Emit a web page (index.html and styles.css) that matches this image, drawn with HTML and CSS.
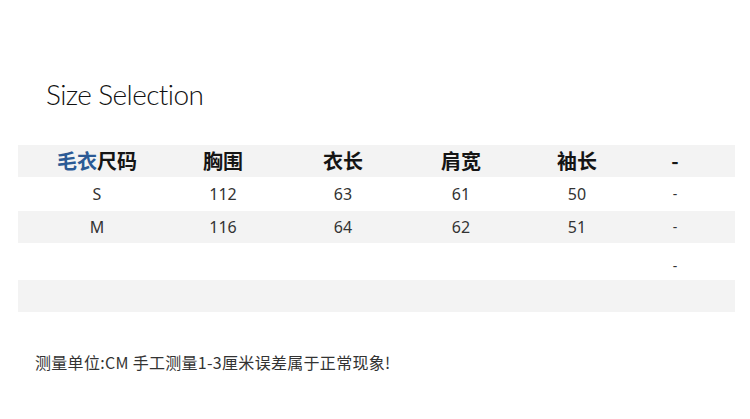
FILE: index.html
```html
<!DOCTYPE html>
<html lang="zh-CN">
<head>
<meta charset="utf-8">
<link rel="stylesheet" href="styles.css">
</head>
<body>
<div class="page">
  <h1 class="title">Size Selection</h1>
  <div class="table">
    <div class="row head r1">
      <div class="cell"><span class="blue">毛衣</span>尺码</div>
      <div class="cell">胸围</div>
      <div class="cell">衣长</div>
      <div class="cell">肩宽</div>
      <div class="cell">袖长</div>
      <div class="cell">-</div>
    </div>
    <div class="row r2">
      <div class="cell">S</div>
      <div class="cell">112</div>
      <div class="cell">63</div>
      <div class="cell">61</div>
      <div class="cell">50</div>
      <div class="cell dash">-</div>
    </div>
    <div class="row gray r3">
      <div class="cell">M</div>
      <div class="cell">116</div>
      <div class="cell">64</div>
      <div class="cell">62</div>
      <div class="cell">51</div>
      <div class="cell dash">-</div>
    </div>
    <div class="row r4">
      <div class="cell"></div>
      <div class="cell"></div>
      <div class="cell"></div>
      <div class="cell"></div>
      <div class="cell"></div>
      <div class="cell dash">-</div>
    </div>
    <div class="row gray r5"></div>
  </div>
  <p class="note">测量单位:CM 手工测量1-3厘米误差属于正常现象!</p>
</div>
</body>
</html>
```
FILE: styles.css
```css
html, body {
  margin: 0;
  padding: 0;
  background: #ffffff;
}
.page {
  width: 750px;
  height: 419px;
  overflow: hidden;
  font-family: "Noto Sans", "Noto Sans CJK SC", sans-serif;
  color: #333;
}
.title {
  margin: 0;
  padding: 76px 0 0 46px;
  height: 36px;
  line-height: 36px;
  font-family: Lato, "Noto Sans", sans-serif;
  font-weight: 300;
  font-size: 28px;
  letter-spacing: -0.6px;
  color: #111;
}
.table {
  margin: 33px 0 0 18px;
  width: 717px;
}
.row {
  display: grid;
  grid-template-columns: 158px 94px 146px 90px 142px 54px 1fr;
  align-items: center;
  font-size: 16px;
  color: #333;
}
.row.head, .row.gray {
  background: #f3f3f3;
}
.r1 { height: 32px; }
.r2 { height: 34px; }
.r3 { height: 32px; }
.r4 { height: 37px; }
.r5 { height: 32px; }
.cell {
  text-align: center;
  line-height: 20px;
}
.head .cell {
  font-family: "Noto Sans CJK SC", sans-serif;
  font-weight: 700;
  font-size: 20px;
  color: #151515;
  line-height: 24px;
}
.blue {
  color: #2b5a95;
}
.dash {
  font-size: 14px;
}
.r4 .dash {
  padding-top: 8px;
}
.note {
  margin: 38px 0 0 35px;
  font-family: "Noto Sans CJK SC", sans-serif;
  font-size: 16px;
  letter-spacing: 0.3px;
  line-height: 24px;
  color: #333;
}
```
